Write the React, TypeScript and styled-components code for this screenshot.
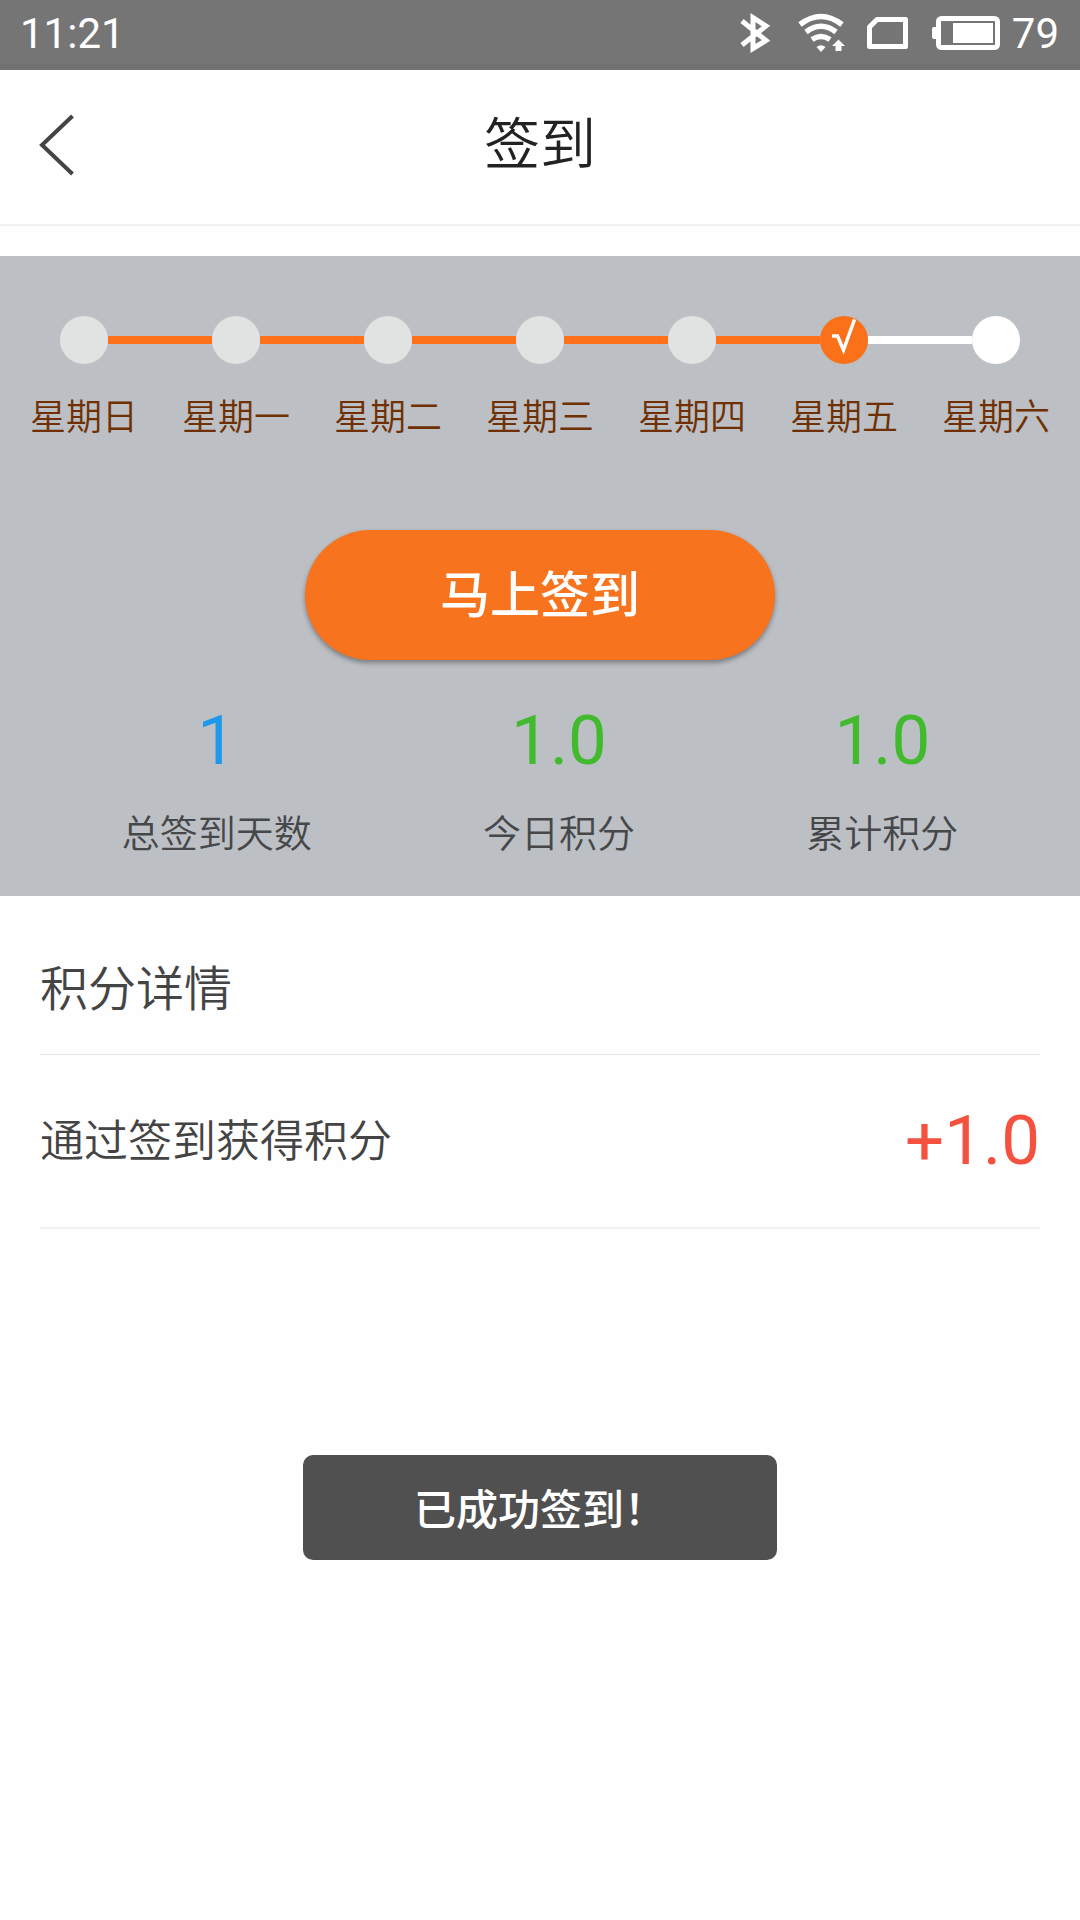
import React from "react";
import styled, { createGlobalStyle } from "styled-components";

const GlobalStyle = createGlobalStyle`
  *, *::before, *::after { box-sizing: border-box; }
  body {
    margin: 0;
    background: #fefefe;
    font-family: "Noto Sans CJK SC", "Noto Sans", sans-serif;
  }
  h1, h2, p, ol, ul, dl, dt, dd { margin: 0; padding: 0; }
  ol, ul { list-style: none; }
`;

const Page = styled.div`
  min-height: 100vh;
  display: flex;
  flex-direction: column;
`;

const StatusBar = styled.div`
  display: flex;
  align-items: center;
  justify-content: space-between;
  height: 70px;
  padding: 4px 21px 0 20px;
  border-bottom: 6px solid #717171;
  background: #757575;
  color: #fff;
  font-family: Roboto, sans-serif;
  font-size: 42px;
  line-height: 60px;
`;

const StatusIcons = styled.div`
  display: flex;
  align-items: center;
`;

const StatusIcon = styled.svg<{ $gap: number }>`
  display: block;
  height: 40px;
  margin-right: ${(p) => p.$gap}px;
  overflow: visible;
`;

const Header = styled.header`
  display: grid;
  grid-template-columns: 120px 1fr 120px;
  align-items: center;
  height: 156px;
  border-bottom: 2px solid #f0f0f0;
  background: #fff;
`;

const BackButton = styled.button`
  display: flex;
  align-items: center;
  height: 120px;
  padding: 0 0 4px 38px;
  border: 0;
  background: none;
  cursor: pointer;
`;

const Title = styled.h1`
  padding-bottom: 14px;
  color: #222;
  font-size: 56px;
  font-weight: 350;
  line-height: 80px;
  text-align: center;
`;

const Panel = styled.section`
  display: flex;
  flex-direction: column;
  align-items: center;
  margin-top: 30px;
  padding: 60px 0 41px;
  background: #bcbfc4;
`;

const Week = styled.ol`
  display: grid;
  grid-template-columns: repeat(7, 1fr);
  width: 100%;
  padding: 0 8px;
`;

type DayState = "past" | "today" | "next";

const Day = styled.li`
  display: flex;
  flex-direction: column;
  gap: 26px;
  color: #6f3104;
  font-size: 36px;
  font-weight: 350;
  line-height: 48px;
  text-align: center;
`;

const Track = styled.div`
  display: flex;
  align-items: center;
`;

const lineColors = { none: "transparent", done: "#fc7119", left: "#fff" };

const Line = styled.span<{ $kind: keyof typeof lineColors }>`
  flex: 1;
  height: 8px;
  background: ${(p) => lineColors[p.$kind]};
`;

const dotColors: Record<DayState, string> = {
  past: "#e1e3e3",
  today: "#fa711a",
  next: "#fff",
};

const Dot = styled.span<{ $state: DayState }>`
  width: 48px;
  height: 48px;
  border-radius: 50%;
  background: ${(p) => dotColors[p.$state]};
`;

const SignButton = styled.button`
  width: 470px;
  max-width: 90%;
  height: 130px;
  margin-top: 92px;
  padding: 0 0 9px;
  border: 0;
  border-radius: 65px;
  background: #f8731d;
  box-shadow: 0 3px 5px rgba(0, 0, 0, 0.35);
  color: #fff;
  font-family: inherit;
  font-size: 50px;
  font-weight: 500;
  line-height: 72px;
  cursor: pointer;
`;

const Stats = styled.dl`
  display: flex;
  justify-content: space-around;
  width: 100%;
  margin-top: 39px;
  padding: 0 36px;
`;

const Stat = styled.div`
  display: flex;
  flex-direction: column-reverse;
  gap: 24px;
  text-align: center;
`;

const StatLabel = styled.dt`
  color: #454749;
  font-size: 38px;
  font-weight: 350;
  line-height: 48px;
`;

const StatValue = styled.dd<{ $color: string }>`
  color: ${(p) => p.$color};
  font-family: Roboto, sans-serif;
  font-size: 69px;
  line-height: 84px;
`;

const Details = styled.section`
  padding: 0 40px;
`;

const DetailsTitle = styled.h2`
  padding: 57px 0 37px;
  border-bottom: 1px solid #e6e6e6;
  color: #444;
  font-size: 48px;
  font-weight: 350;
  line-height: 64px;
`;

const Entry = styled.li`
  display: flex;
  align-items: center;
  justify-content: space-between;
  padding: 42px 0;
  border-bottom: 2px solid #f0f0f0;
`;

const EntryName = styled.span`
  padding-bottom: 6px;
  color: #444;
  font-size: 44px;
  font-weight: 350;
  line-height: 64px;
`;

const EntryPoints = styled.span`
  color: #f4513f;
  font-family: Roboto, sans-serif;
  font-size: 69px;
  line-height: 88px;
`;

const Toast = styled.p`
  position: fixed;
  bottom: 360px;
  left: 50%;
  width: 474px;
  margin-left: -237px;
  padding: 22px 0 23px;
  border-radius: 10px;
  background: #505050;
  color: #fff;
  font-size: 42px;
  font-weight: 500;
  line-height: 60px;
  text-align: center;
`;

const days: { name: string; state: DayState }[] = [
  { name: "星期日", state: "past" },
  { name: "星期一", state: "past" },
  { name: "星期二", state: "past" },
  { name: "星期三", state: "past" },
  { name: "星期四", state: "past" },
  { name: "星期五", state: "today" },
  { name: "星期六", state: "next" },
];

const stats = [
  { label: "总签到天数", value: "1", color: "#1f98ec" },
  { label: "今日积分", value: "1.0", color: "#41bb2d" },
  { label: "累计积分", value: "1.0", color: "#41bb2d" },
];

function BluetoothIcon() {
  return (
    <StatusIcon $gap={28} width="30" viewBox="740 14 30 40" aria-label="蓝牙">
      <path
        d="M742 21 L766 40.500 L753 48.500 V17.500 L766 26 L742 45"
        fill="none"
        stroke="#fff"
        strokeWidth="5"
      />
    </StatusIcon>
  );
}

function WifiIcon() {
  return (
    <StatusIcon $gap={21} width="48" viewBox="798 14 48 40" aria-label="无线网络">
      <g fill="none" stroke="#fff" strokeWidth="5.5">
        <path d="M800 24.500 Q821 8.500 842 24.500" />
        <path d="M806 32 Q821 20.500 836 32" />
        <path d="M812 39.500 Q821 33.500 830 39.500" />
      </g>
      <path d="M816.500 47 Q821 43.500 825.500 47 L821 52 Z" fill="#fff" />
      <path d="M838.500 39.500 L845 46 H841.500 V51 H835.500 V46 H832 Z" fill="#fff" />
    </StatusIcon>
  );
}

function SimIcon() {
  return (
    <StatusIcon $gap={23} width="42" viewBox="867 14 42 40" aria-label="SIM 卡">
      <path
        d="M877 19.500 H905.500 V46.500 H869.500 V27 Z"
        fill="none"
        stroke="#fff"
        strokeWidth="5"
        strokeLinejoin="round"
      />
    </StatusIcon>
  );
}

function BatteryIcon() {
  return (
    <StatusIcon $gap={11} width="69" viewBox="932 14 69 40" aria-label="电量">
      <rect
        x="938.5"
        y="18.5"
        width="59"
        height="29"
        rx="3"
        fill="none"
        stroke="#fff"
        strokeWidth="5"
      />
      <rect x="932" y="27" width="6" height="12" rx="2" fill="#fff" />
      <rect x="953" y="23" width="40" height="20" fill="#fff" />
    </StatusIcon>
  );
}

function CheckIcon() {
  return (
    <svg width="48" height="48" viewBox="0 0 48 48" aria-label="已签到">
      <path
        d="M12 20 H17.500 L23.500 34 L34.500 3.500"
        fill="none"
        stroke="#fff"
        strokeWidth="3.5"
      />
    </svg>
  );
}

export default function App() {
  return (
    <Page>
      <GlobalStyle />
      <StatusBar>
        <time>11:21</time>
        <StatusIcons>
          <BluetoothIcon />
          <WifiIcon />
          <SimIcon />
          <BatteryIcon />
          <span>79</span>
        </StatusIcons>
      </StatusBar>
      <Header>
        <BackButton type="button" aria-label="返回">
          <svg width="38" height="62" viewBox="0 0 38 62">
            <path d="M34.500 2 L4 31 L34.500 60" fill="none" stroke="#444" strokeWidth="4" />
          </svg>
        </BackButton>
        <Title>签到</Title>
      </Header>
      <Panel>
        <Week>
          {days.map((day, i) => (
            <Day key={day.name}>
              <Track>
                <Line $kind={i === 0 ? "none" : day.state === "next" ? "left" : "done"} />
                <Dot $state={day.state}>{day.state === "today" && <CheckIcon />}</Dot>
                <Line
                  $kind={i === days.length - 1 ? "none" : day.state === "past" ? "done" : "left"}
                />
              </Track>
              <span>{day.name}</span>
            </Day>
          ))}
        </Week>
        <SignButton type="button">马上签到</SignButton>
        <Stats>
          {stats.map((s) => (
            <Stat key={s.label}>
              <StatLabel>{s.label}</StatLabel>
              <StatValue $color={s.color}>{s.value}</StatValue>
            </Stat>
          ))}
        </Stats>
      </Panel>
      <Details>
        <DetailsTitle>积分详情</DetailsTitle>
        <ul>
          <Entry>
            <EntryName>通过签到获得积分</EntryName>
            <EntryPoints>+1.0</EntryPoints>
          </Entry>
        </ul>
      </Details>
      <Toast role="status">已成功签到！</Toast>
    </Page>
  );
}
